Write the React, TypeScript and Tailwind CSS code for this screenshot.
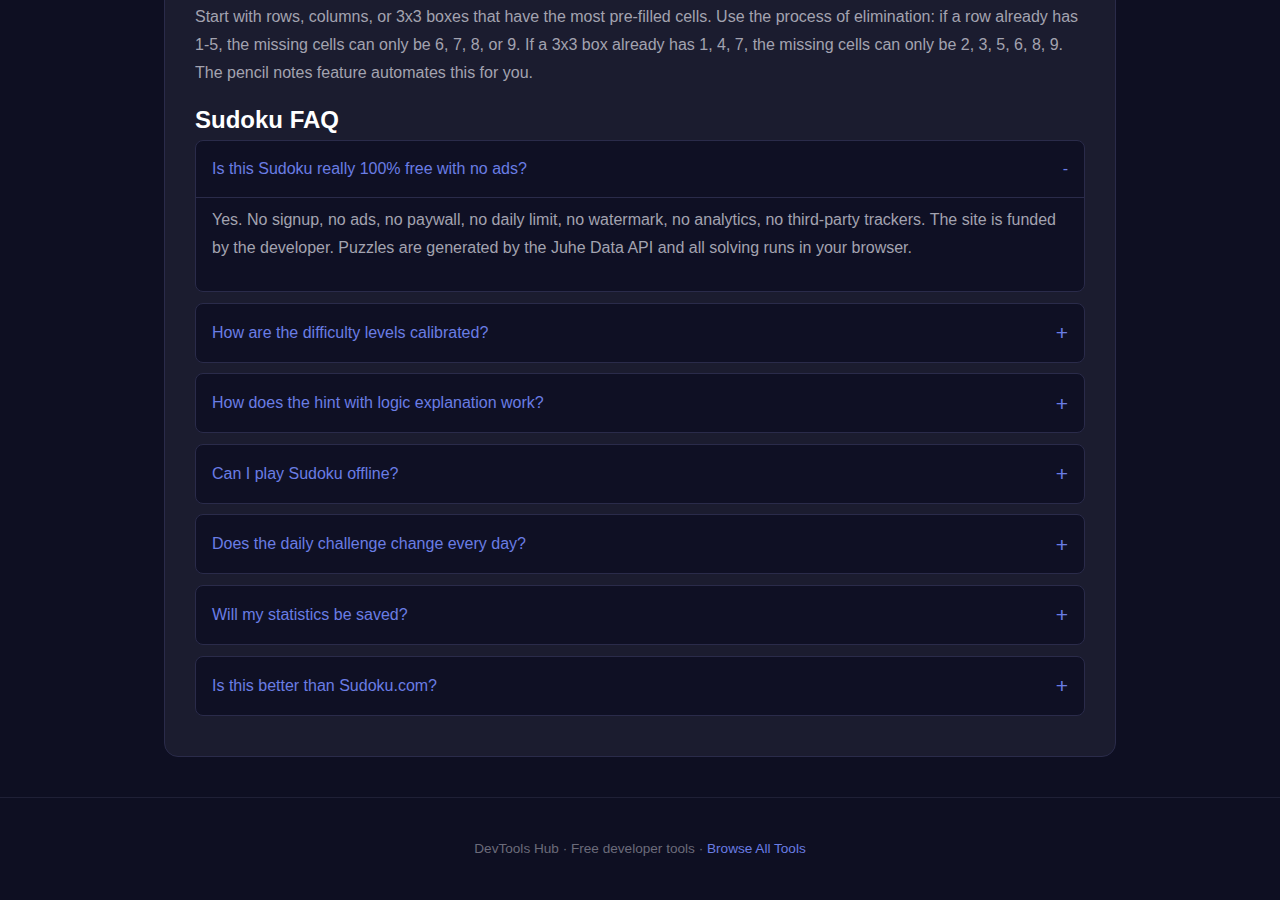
import React, { useState } from "react"

const faqs = [
  {
    q: "Is this Sudoku really 100% free with no ads?",
    a: "Yes. No signup, no ads, no paywall, no daily limit, no watermark, no analytics, no third-party trackers. The site is funded by the developer. Puzzles are generated by the Juhe Data API and all solving runs in your browser.",
  },
  {
    q: "How are the difficulty levels calibrated?",
    a: "Each puzzle is rated by the techniques needed to solve it, from singles on Easy to chains and fish patterns on Expert.",
  },
  {
    q: "How does the hint with logic explanation work?",
    a: "A hint picks the next logical step and explains which technique reveals the value, so you learn instead of just filling cells.",
  },
  {
    q: "Can I play Sudoku offline?",
    a: "Once a puzzle is loaded, everything runs locally in your browser, so you can keep playing without a connection.",
  },
  {
    q: "Does the daily challenge change every day?",
    a: "Yes. A new daily puzzle appears at midnight UTC and is the same for every player.",
  },
  {
    q: "Will my statistics be saved?",
    a: "Statistics are stored in your browser's local storage and stay on your device.",
  },
  {
    q: "Is this better than Sudoku.com?",
    a: "It has no ads, no account and explains every hint, which makes it a good fit for learning.",
  },
]

const FaqItem = ({ q, a, open, onToggle }: { q: string; a: string; open: boolean; onToggle: () => void }) => {
  return (
    <div className="rounded-lg border border-[#2a2b4a] bg-[#0f1024] overflow-hidden">
      <button
        onClick={onToggle}
        className={
          open
            ? "w-full flex items-center justify-between px-4 h-[56px] text-left text-[16px] text-[#6a7de4] cursor-pointer"
            : "w-full flex items-center justify-between px-4 h-[58px] text-left text-[16px] text-[#6a7de4] cursor-pointer"
        }
      >
        <span>{q}</span>
        {open ? (
          <span className="text-[16px] leading-none">-</span>
        ) : (
          <span className="text-[21px] leading-none">+</span>
        )}
      </button>
      {open && (
        <div className="border-t border-[#2a2b4a] px-4 pt-[8px] pb-[29px] text-[16px] leading-[28px] text-[#a3a3b0]">
          {a}
        </div>
      )}
    </div>
  )
}

export default function App() {
  const [openIndex, setOpenIndex] = useState<number | null>(0)

  return (
    <div
      className="min-h-[900px] bg-[#0e0f22] overflow-hidden"
      style={{ fontFamily: '"Liberation Sans", Arial, sans-serif' }}
    >
      <main className="w-[952px] mx-auto">
        <section className="-mt-[30px] pt-[32px] px-[30px] pb-[40px] rounded-[14px] border border-[#2a2b4a] bg-[#1b1c2f]">
          <p className="text-[16px] leading-[28px] text-[#a3a3b0] mb-[17px]">
            Start with rows, columns, or 3x3 boxes that have the most pre-filled cells. Use the process of
            elimination: if a row already has 1-5, the missing cells can only be 6, 7, 8, or 9. If a 3x3 box
            already has 1, 4, 7, the missing cells can only be 2, 3, 5, 6, 8, 9. The pencil notes feature
            automates this for you.
          </p>
          <h2 className="text-[24px] leading-[31px] font-bold text-white mb-[5px]">Sudoku FAQ</h2>
          <div className="flex flex-col gap-[10.6px]">
            {faqs.map((f, i) => (
              <FaqItem
                key={f.q}
                q={f.q}
                a={f.a}
                open={openIndex === i}
                onToggle={() => setOpenIndex(openIndex === i ? null : i)}
              />
            ))}
          </div>
        </section>
      </main>

      <footer className="mt-[40px] border-t border-[#1f2036] pt-[41px] pb-[44px] text-center text-[13.6px] leading-[20px] text-[#6b6b7a]">
        DevTools Hub · Free developer tools ·{" "}
        <a href="#" className="text-[#6a7de4]">
          Browse All Tools
        </a>
      </footer>
    </div>
  )
}
